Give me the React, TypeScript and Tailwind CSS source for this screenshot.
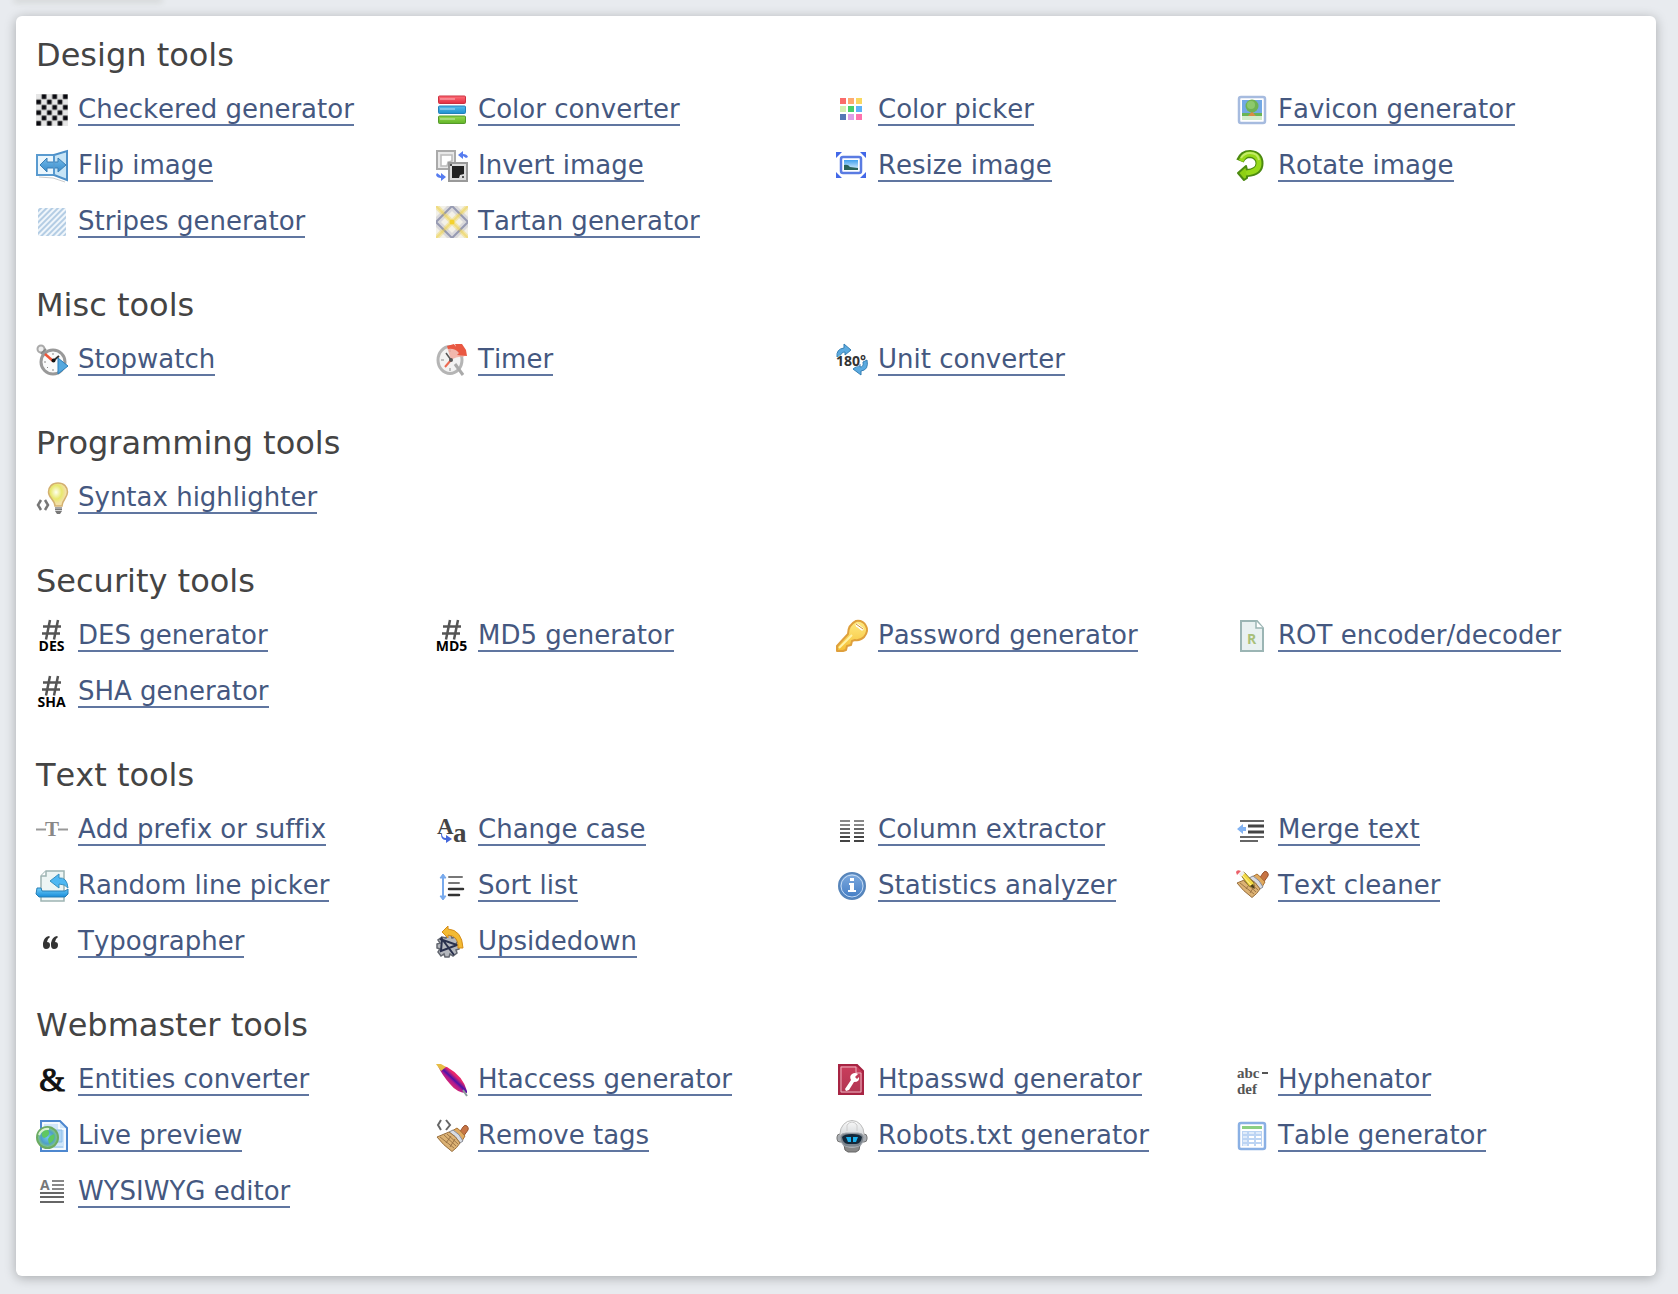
import type { ReactNode } from "react";

type Tool = { name: string; icon: ReactNode };
type ToolGroup = { title: string; tools: Tool[] };

function Gradient({ id, from, to }: { id: string; from: string; to: string }) {
  return (
    <linearGradient id={id} x1="0" y1="0" x2="0" y2="1">
      <stop offset="0" stopColor={from} />
      <stop offset="1" stopColor={to} />
    </linearGradient>
  );
}

function Hash({ label }: { label: string }) {
  return (
    <>
      <path
        d="M14 0 10 19.5M22 0l-4 19.5M7 6.5h18M6 13.5h18"
        stroke="#555"
        strokeWidth="2.5"
        fill="none"
      />
      <text
        x="15.5"
        y="31"
        textAnchor="middle"
        fontFamily="Open Sans, sans-serif"
        fontWeight="700"
        fontSize="14"
        fill="#000"
      >
        {label}
      </text>
    </>
  );
}

function Brush() {
  return (
    <>
      <path d="m23 13 4-6q2-3 4-1t1 4l-5 7z" fill="#c87544" stroke="#9a5430" />
      <path d="m16 11 5-3q3 2 8 8l-3 5q-4-6-10-10z" fill="#e0a95e" stroke="#a87234" />
      <path d="m13 12 4-2q7 4 10 11l-3 2q-4-7-11-11z" fill="#d8dbe2" stroke="#888c96" />
      <path d="M13 12q7 4 11 11-3 5-8 8.5Q7 25 1 17z" fill="#dcb274" stroke="#997040" />
      <path
        d="m4 17 14 11M8 15l12 11M11 14l11 10M10 23l5-7M14 27l5-8"
        stroke="#8f683c"
        strokeOpacity=".8"
        fill="none"
      />
    </>
  );
}

const swatches = [
  "#fb6b6b", "#fdaa70", "#f8d861",
  "#d3f0b2", "#46cf6b", "#5cb2f7",
  "#5577b5", "#dda0e6", "#ff72ae",
];

const groups: ToolGroup[] = [
  {
    title: "Design tools",
    tools: [
      {
        name: "Checkered generator",
        icon: (
          <>
            <defs>
              <pattern id="checks" width="10.667" height="10.667" patternUnits="userSpaceOnUse">
                <rect x="5.333" width="5.333" height="5.333" rx="1" fill="#777" />
                <rect y="5.333" width="5.333" height="5.333" rx="1" fill="#777" />
                <rect x="6" y=".7" width="4" height="4" fill="#08080e" />
                <rect x=".7" y="6" width="4" height="4" fill="#08080e" />
              </pattern>
            </defs>
            <rect width="32" height="32" fill="#e6e6e6" />
            <rect width="32" height="32" fill="url(#checks)" />
          </>
        ),
      },
      {
        name: "Color converter",
        icon: (
          <>
            <Gradient id="cc-red" from="#ff6d77" to="#e22c40" />
            <Gradient id="cc-blue" from="#55b9ec" to="#1e90cf" />
            <Gradient id="cc-green" from="#94d84c" to="#62b428" />
            <rect x="2.5" y="2" width="27" height="7.5" rx="1" fill="url(#cc-red)" stroke="#cc3040" />
            <rect x="2.5" y="12" width="27" height="7.5" rx="1" fill="url(#cc-blue)" stroke="#2480b8" />
            <rect x="2.5" y="22" width="27" height="7.5" rx="1" fill="url(#cc-green)" stroke="#54992a" />
            <path d="M4 5h15M4 15h15M4 25h15" stroke="#fff" strokeOpacity=".3" strokeWidth="2" />
          </>
        ),
      },
      {
        name: "Color picker",
        icon: swatches.map((fill, i) => (
          <rect key={fill} x={4 + (i % 3) * 8} y={4 + Math.floor(i / 3) * 8} width="6" height="6" fill={fill} />
        )),
      },
      {
        name: "Favicon generator",
        icon: (
          <>
            <rect x="3" y="3" width="26" height="26" rx="2" fill="#fff" stroke="#a6bbdf" strokeWidth="2.5" />
            <rect x="6" y="6" width="20" height="15" fill="#72a8e4" />
            <path d="M6 19h20v3H6z" fill="#69b455" />
            <path d="M6 22h20v4H6z" fill="#d3ecca" />
            <path d="m16 16 2 4 2 2h-8l2-2z" fill="#db8b45" />
            <circle cx="16" cy="12" r="6.5" fill="#6fb352" />
            <circle cx="15" cy="11" r="4" fill="#8dc96c" />
          </>
        ),
      },
      {
        name: "Flip image",
        icon: (
          <>
            <Gradient id="flip-arrow" from="#70b8e8" to="#398ccb" />
            <path d="M1 5h17v20H1z" fill="#eaf6fd" stroke="#5a9bd0" strokeWidth="2" />
            <path d="M18 5 31 1v29l-13-5z" fill="#c6e4f6" stroke="#4d90c8" strokeWidth="2" />
            <path d="m3 27 14 1 12 4" stroke="#aaa" fill="none" opacity=".6" />
            <path
              d="m4 15 7-7v4h11V8l8 7-8 7v-4H11v4z"
              fill="url(#flip-arrow)"
              stroke="#3b7fb5"
            />
            <path d="M18 5v20" stroke="#5a9bd0" strokeOpacity=".7" strokeWidth="2" />
          </>
        ),
      },
      {
        name: "Invert image",
        icon: (
          <>
            <rect x="1" y="1" width="18" height="18" fill="#e8e8e8" stroke="#aaa" strokeWidth="2" />
            <path d="M5 5h11v6l-4 1-1 4H5z" fill="#fff" stroke="#bbb" strokeWidth="1.5" />
            <rect x="13" y="13" width="18" height="18" fill="#ddd" stroke="#999" strokeWidth="2" />
            <path d="M16 16h12v8l-4 1-1 3h-7z" fill="#222" />
            <path d="M14 14h2v2h-2zM26 26h2v2h-2z" fill="#555" />
            <path d="m22 5 5-4v3q4 0 5 3l-2 1-3-2v3zM10 27l-5 4v-3q-4 0-5-3l1-2 4 3v-3z" fill="#567cf0" />
          </>
        ),
      },
      {
        name: "Resize image",
        icon: (
          <>
            <defs>
              <Gradient id="resize-sky" from="#3fa0ef" to="#e6f6ff" />
            </defs>
            <path d="M0 2h6L0 8zM24 2h6v6zM0 22v6h6zM30 22v6h-6z" fill="#4268e8" />
            <rect x="5" y="7" width="20" height="16" rx="2" fill="#fff" stroke="#5a7be2" strokeWidth="2.5" />
            <rect x="8" y="10" width="14" height="10" fill="url(#resize-sky)" />
            <path d="M8 15q4-1 6 2l8 1v2H8z" fill="#29635a" />
          </>
        ),
      },
      {
        name: "Rotate image",
        icon: (
          <>
            <path
              d="M4 11q3-7 10-7 9.500 1 9.500 9.500T11 23"
              fill="none"
              stroke="#4c8a10"
              strokeWidth="8"
            />
            <path d="m2 23 8-7 1 4v8l-3 2z" fill="#8ed012" stroke="#4c8a10" strokeWidth="2" strokeLinejoin="round" />
            <path
              d="M5 11q3-7 9-7 9 1 9 9.500T10 23"
              fill="none"
              stroke="#96d919"
              strokeWidth="5"
            />
            <path d="M5 8q3-5 9-5 8 0 9 7" fill="none" stroke="#c3eb67" strokeWidth="2" />
          </>
        ),
      },
      {
        name: "Stripes generator",
        icon: (
          <>
            <defs>
              <pattern
                id="stripes"
                width="4"
                height="4"
                patternUnits="userSpaceOnUse"
                patternTransform="rotate(-45)"
              >
                <rect width="4" height="2" fill="#b4cde4" />
              </pattern>
            </defs>
            <rect x="2" y="2" width="28" height="28" rx="1" fill="#f0f6fb" />
            <rect x="2" y="2" width="28" height="28" rx="1" fill="url(#stripes)" />
          </>
        ),
      },
      {
        name: "Tartan generator",
        icon: (
          <>
            <clipPath id="tartan">
              <rect width="32" height="32" />
            </clipPath>
            <rect width="32" height="32" fill="#f3f1e8" />
            <g fill="none" clipPath="url(#tartan)">
              <path d="m16 0 16 16-16 16L0 16z" stroke="#9194b2" strokeOpacity=".25" strokeWidth="7" />
              <path d="m0 0 32 32M32 0 0 32" stroke="#f2dc72" strokeOpacity=".5" strokeWidth="5" />
              <path d="m16 0 16 16-16 16L0 16z" stroke="#8589a8" strokeOpacity=".8" strokeWidth="2" />
              <path d="m0 0 32 32M32 0 0 32" stroke="#edd14a" strokeOpacity=".45" strokeWidth="2" />
            </g>
            <circle cx="16" cy="16" r="2.5" fill="#f4d22c" />
          </>
        ),
      },
    ],
  },
  {
    title: "Misc tools",
    tools: [
      {
        name: "Stopwatch",
        icon: (
          <>
            <circle cx="5" cy="5" r="3.5" fill="#eee" stroke="#aaa" strokeWidth="2" />
            <path d="m5 10 5-5" stroke="#888" strokeWidth="2" />
            <circle cx="17" cy="18" r="12" fill="#fafafa" stroke="#999" strokeWidth="3" />
            <path d="M17 9v2M8 18h2M17 25v2M11 24l1-1" stroke="#888" />
            <path d="m9 10 8 7" stroke="#f05537" strokeWidth="2.5" />
            <path d="m17 17 6-5" stroke="#333" strokeWidth="2" />
            <circle cx="17.5" cy="16.5" r="2" fill="#111" />
            <path d="M22 14v16l10-8z" fill="#55a8de" stroke="#2d7fba" />
          </>
        ),
      },
      {
        name: "Timer",
        icon: (
          <>
            <ellipse cx="14" cy="16" rx="12" ry="13.5" fill="#f2f2f2" stroke="#b5b5b5" strokeWidth="3" />
            <path d="M14 5v3M5 16h3M14 24v3M21 24l-2-2" stroke="#888" />
            <path d="m19 20 8 11" stroke="#aaa" strokeWidth="3" />
            <path d="M15 16 11 3q7-3 12 1l7 7-3 2q-5-1-12 3z" fill="#f0a79b" fillOpacity=".8" />
            <path d="m11 2 7-2 2 3-1-3h7l4 6 1 6-10-1 2-2q-4-5-11-4z" fill="#e95842" />
            <path d="m15 16-6 7" stroke="#ec6a52" strokeWidth="2" />
            <path d="m15 16-5-7" stroke="#555" strokeWidth="1.5" />
            <circle cx="15" cy="16" r="2" fill="#555" />
          </>
        ),
      },
      {
        name: "Unit converter",
        icon: (
          <>
            <path d="M1 13Q0 5 8 4V0l7 6-6 5V8q-4 0-5 5z" fill="#5baae0" stroke="#347fb4" />
            <path d="M31 16q2 10-6 11v4l-8-6 7-5v3q4 0 3-5z" fill="#5baae0" stroke="#347fb4" />
            <text
              x="0"
              y="22"
              fontFamily="Open Sans, sans-serif"
              fontWeight="700"
              fontSize="14"
              fill="#333"
              stroke="#fff"
              strokeWidth="1"
              paintOrder="stroke"
            >
              180°
            </text>
          </>
        ),
      },
    ],
  },
  {
    title: "Programming tools",
    tools: [
      {
        name: "Syntax highlighter",
        icon: (
          <>
            <defs>
              <radialGradient id="bulb" cx=".4" cy=".4">
                <stop offset="0" stopColor="#fffff0" />
                <stop offset=".6" stopColor="#e8e86e" />
                <stop offset="1" stopColor="#f3e1a5" />
              </radialGradient>
            </defs>
            <path d="m5 18-3 5 3 5M9 18l3 5-3 5" fill="none" stroke="#777" strokeWidth="2.5" />
            <path
              d="M22 1c6 0 9.500 4 9.500 9 0 6-5.500 8-5.500 14h-7c0-6-6.500-8-6.500-14 0-5 3.500-9 9.500-9z"
              fill="url(#bulb)"
              stroke="#d3b070"
              strokeWidth="1.5"
            />
            <path d="M19 25h7v4l-2 3h-3l-2-3z" fill="#777" />
            <path d="M19 26h7M19 28.500h7" stroke="#d5d5d5" />
          </>
        ),
      },
    ],
  },
  {
    title: "Security tools",
    tools: [
      { name: "DES generator", icon: <Hash label="DES" /> },
      { name: "MD5 generator", icon: <Hash label="MD5" /> },
      {
        name: "Password generator",
        icon: (
          <>
            <Gradient id="key-gold" from="#ffeb83" to="#f5bf34" />
            <path
              d="M20 1q7-1 10 5 3 5-2 11-4 4-9 3l-3 1-1 4-4 1-1 4-3 1H1v-5l11-12q0-9 8-13z"
              fill="url(#key-gold)"
              stroke="#dfa03c"
              strokeWidth="2"
              strokeLinejoin="round"
            />
            <path d="m3 28 13-13" stroke="#fff3a8" strokeWidth="2" />
            <path d="m21 5 5 4" stroke="#fff" strokeWidth="3" strokeLinecap="round" />
            <path d="m20 4 7 5" stroke="#cf9236" fill="none" />
          </>
        ),
      },
      {
        name: "ROT encoder/decoder",
        icon: (
          <>
            <path d="M5 1h16l6 7v23H5z" fill="#e9f1f1" stroke="#9bb5b4" strokeWidth="2" />
            <path d="M20 1v7h7" fill="#fff" stroke="#9bb5b4" strokeWidth="1.5" />
            <text
              x="15.5"
              y="24"
              textAnchor="middle"
              fontFamily="Open Sans, sans-serif"
              fontWeight="700"
              fontSize="14"
              fill="#a8c078"
            >
              R
            </text>
          </>
        ),
      },
      { name: "SHA generator", icon: <Hash label="SHA" /> },
    ],
  },
  {
    title: "Text tools",
    tools: [
      {
        name: "Add prefix or suffix",
        icon: (
          <>
            <path d="M0 15.500h10M22 15.500h10" stroke="#999" strokeWidth="2" />
            <text
              x="16"
              y="22"
              textAnchor="middle"
              fontFamily="Liberation Serif, serif"
              fontWeight="700"
              fontSize="21"
              fill="#888"
            >
              T
            </text>
          </>
        ),
      },
      {
        name: "Change case",
        icon: (
          <>
            <g fontFamily="Liberation Serif, serif" fontWeight="700" fill="#444">
              <text x="1" y="20" fontSize="23">A</text>
              <text x="17" y="28" fontSize="27">a</text>
            </g>
            <path d="M6 20q0 4 4 4v-3l6 4-6 4v-3q-5 0-5-6z" fill="#4467dc" />
          </>
        ),
      },
      {
        name: "Column extractor",
        icon: (
          <>
            <path d="M4 7h10M18 7h10M4 11h10M18 11h10" stroke="#888" strokeWidth="2" />
            <path d="M4 15h10M18 15h10M4 19h10M18 19h10" stroke="#666" strokeWidth="2" />
            <path d="M4 23h10M18 23h10M4 27h10M18 27h10" stroke="#444" strokeWidth="2" />
          </>
        ),
      },
      {
        name: "Merge text",
        icon: (
          <>
            <path d="M4 7h24M4 23h24M4 27h18" stroke="#666" strokeWidth="2" />
            <path d="M12 12h16M12 18h16" stroke="#444" strokeWidth="3" />
            <path d="m1 15 6-5v3h3v4H7v3z" fill="#83b3f2" />
          </>
        ),
      },
      {
        name: "Random line picker",
        icon: (
          <>
            <Gradient id="tray" from="#72d0fb" to="#198bd8" />
            <path d="M5 24V6l5-5h18v22z" fill="#edf5f4" stroke="#9db4b3" strokeWidth="1.5" />
            <path d="M5 6h5V1" fill="#fff" stroke="#9db4b3" strokeWidth="1.5" />
            <path d="M5 25h23v6H5z" fill="#f2f6f5" stroke="#9db4b3" strokeWidth="1.5" />
            <path d="M1 18h4l1 3h23l3-2v5l-3 3H3l-3-3z" fill="url(#tray)" stroke="#287fb5" />
            <path d="m14 11 9-7v4q8-1 9 10-3-4-9-4v4z" fill="#4fb8f3" stroke="#378fbe" />
          </>
        ),
      },
      {
        name: "Sort list",
        icon: (
          <>
            <path d="M7 5v24" stroke="#78aaed" strokeWidth="2" />
            <path d="m4 8 3-4 3 4zM4 26l3 4 3-4z" fill="#78aaed" stroke="#78aaed" />
            <path d="M13 7h13M13 13h10" stroke="#777" strokeWidth="2" strokeLinecap="round" />
            <path d="M13 19h14M13 25h10" stroke="#333" strokeWidth="2.5" strokeLinecap="round" />
          </>
        ),
      },
      {
        name: "Statistics analyzer",
        icon: (
          <>
            <Gradient id="info-blue" from="#80ace0" to="#417bc3" />
            <circle cx="16" cy="16" r="13" fill="url(#info-blue)" stroke="#5785ba" strokeWidth="2" />
            <circle cx="16" cy="16" r="11" fill="none" stroke="#c6dcf3" strokeWidth="1" />
            <path d="M14 8h4v3h-4zM13 13h5v7h2v2h-8v-2h2v-5h-1z" fill="#fff" />
          </>
        ),
      },
      {
        name: "Text cleaner",
        icon: (
          <>
            <g transform="translate(0 -4)">
              <Brush />
            </g>
            <path d="m4 4 4-2 10 11v5l-5-2z" fill="#f3d943" stroke="#8d7a2d" />
            <path d="m6 5 9 10" stroke="#fff4a0" />
            <path d="m14 16 3-2 2 5z" fill="#4b3b20" />
            <path d="m3 4 3-3 3 2-4 4z" fill="#eee" />
            <path d="M0 2q1-3 5-1L1 5z" fill="#eb5f68" />
          </>
        ),
      },
      {
        name: "Typographer",
        icon: (
          <path
            d="M13 10q-5 1-6 7v2q0 4 3 4 4 0 4-4 0-3-3-3 0-3 3-5zM21 10q-5 1-6 7v2q0 4 3 4 4 0 4-4 0-3-3-3 0-3 3-5z"
            fill="#333"
          />
        ),
      },
      {
        name: "Upsidedown",
        icon: (
          <>
            <path
              d="m10 12 1-3h4l1 3 3-1 3 4-2 3 3 1v4l-3 1 1 3-4 3-3-2-1 3h-4l-1-3-3 2-3-4 2-3-3-1v-4l3-1-2-3 4-3z"
              fill="#b4b7bd"
              stroke="#62666f"
              strokeWidth="1.5"
            />
            <path d="m4 13 17 6L5 25l1-12 12 16" fill="none" stroke="#29304d" strokeWidth="2" />
            <path d="m6 6 6-6v3q14 1 15 19h-5q1-12-10-13v3z" fill="#f3ba32" stroke="#d58d1a" />
          </>
        ),
      },
    ],
  },
  {
    title: "Webmaster tools",
    tools: [
      {
        name: "Entities converter",
        icon: (
          <text
            x="16"
            y="27"
            textAnchor="middle"
            fontFamily="Liberation Serif, serif"
            fontSize="33"
            fill="#111"
            stroke="#111"
          >
            &amp;
          </text>
        ),
      },
      {
        name: "Htaccess generator",
        icon: (
          <>
            <linearGradient id="feather" x1=".3" y1=".7" x2=".7" y2=".3">
              <stop offset="0" stopColor="#f0325f" />
              <stop offset=".4" stopColor="#b01a90" />
              <stop offset=".55" stopColor="#4b12a8" />
              <stop offset=".8" stopColor="#e8286c" />
            </linearGradient>
            <path d="m2 2 9 1q16 9 20 24v2q-10 0-17-9Q6 11 2 2z" fill="url(#feather)" />
            <path d="M0 0h5l5 3-5 4z" fill="#e7bd45" />
            <path d="m27 26 4 6" stroke="#899" strokeWidth="2" />
          </>
        ),
      },
      {
        name: "Htpasswd generator",
        icon: (
          <>
            <Gradient id="htp-red" from="#cb3d5c" to="#b03552" />
            <path d="M3 1h18l6 6v23H3z" fill="url(#htp-red)" stroke="#a72443" strokeWidth="2" />
            <path d="M5 3h15v6h5v19H5z" fill="none" stroke="#edb2bf" />
            <path
              d="m9 25 6-9q-2-4 1-6 3-2 6 0l-3 3 2 2 2-2q1 5-5 5l-5 8-3 1z"
              fill="#fff"
            />
          </>
        ),
      },
      {
        name: "Hyphenator",
        icon: (
          <>
            <g fontFamily="Liberation Serif, serif" fontWeight="700" fontSize="15" fill="#555">
              <text x="1" y="14">abc</text>
              <text x="1" y="30">def</text>
            </g>
            <path d="M26 9h6" stroke="#555" strokeWidth="2" />
          </>
        ),
      },
      {
        name: "Live preview",
        icon: (
          <>
            <defs>
              <radialGradient id="globe" cx=".5" cy=".5">
                <stop offset="0" stopColor="#6ec5ef" />
                <stop offset=".6" stopColor="#4f9ec8" />
                <stop offset="1" stopColor="#8bd07c" />
              </radialGradient>
            </defs>
            <path d="M5 1h19l7 7v23H5z" fill="#cfe6fa" stroke="#4d87cf" strokeWidth="2" />
            <path d="M7 3h16v6h6v20H7z" fill="none" stroke="#fff" strokeWidth="1.5" />
            <path d="M20 10h6v12h-6zM18 27h9" fill="#afd5f5" stroke="#91bfe9" />
            <circle cx="11.5" cy="17.5" r="10.5" fill="url(#globe)" stroke="#6cab62" strokeWidth="2" />
            <path d="M7 11q5-3 6 1t-5 6q-4-2-1-7zM14 16l4-2q2 4-2 8l-3 2-1-5z" fill="#5fc761" />
            <path d="M3 15q3-7 10-6" stroke="#d7f3d0" strokeWidth="2" fill="none" />
          </>
        ),
      },
      {
        name: "Remove tags",
        icon: (
          <>
            <Brush />
            <path d="M5 0 2 5l3 5M10 0l4 5-4 5" fill="none" stroke="#666" strokeWidth="2" />
          </>
        ),
      },
      {
        name: "Robots.txt generator",
        icon: (
          <>
            <Gradient id="helmet" from="#fafafa" to="#b9bdc1" />
            <path d="M8 25h16l-1 5-3 2h-8l-3-2z" fill="#888" stroke="#666" />
            <rect x="1" y="14" width="30" height="8" rx="3" fill="#a9adb2" stroke="#777" />
            <ellipse cx="16" cy="14" rx="12" ry="13.5" fill="url(#helmet)" stroke="#bbb" />
            <path d="M11 11V5q5-6 10 0v6" fill="none" stroke="#ccc" />
            <path d="M4 17q1-4 6-4h12q5 0 6 4-1 10-9 10h-6q-8 0-9-10z" fill="#7d858d" stroke="#a5aab0" />
            <path d="M6 17q2-3 10-3t10 3q-1 7-6 7h-8q-5 0-6-7z" fill="#14283a" />
            <path d="M10 17h5v5h-3zM17 17h5l-2 5h-3z" fill="#1bb1ed" />
          </>
        ),
      },
      {
        name: "Table generator",
        icon: (
          <>
            <rect x="3" y="3" width="26" height="26" rx="2" fill="#fff" stroke="#8ab0e4" strokeWidth="2.5" />
            <path d="M6 7.500h20" stroke="#8ccf83" strokeWidth="3" />
            <path d="M6 11h20v15H6z" fill="#bcd4f3" />
            <path d="M7 12h4v2H7zm6 0h5v2h-5zm7 0h5v2h-5zM7 16h4v2H7zm0 4h4v2H7zm0 4h4v2H7z" fill="#dfebfa" />
            <path d="M13 16h5v2h-5zm7 0h5v2h-5zm-7 4h5v2h-5zm7 0h5v2h-5zm-7 4h5v2h-5zm7 0h5v2h-5z" fill="#fff" />
          </>
        ),
      },
      {
        name: "WYSIWYG editor",
        icon: (
          <>
            <path d="M16 5h12M16 9h12M16 13h12" stroke="#888" strokeWidth="2" />
            <path d="M4 17h24M4 21h24M4 26h24" stroke="#666" strokeWidth="2" />
            <text x="4" y="14" fontFamily="Open Sans, sans-serif" fontWeight="700" fontSize="14" fill="#777">
              A
            </text>
          </>
        ),
      },
    ],
  },
];

function ToolLink({ tool }: { tool: Tool }) {
  return (
    <li className="flex h-8 items-end gap-[10px]">
      <svg viewBox="0 0 32 32" className="size-8 shrink-0 overflow-visible" aria-hidden="true">
        {tool.icon}
      </svg>
      <a
        href="#"
        className="h-8 border-b-2 border-[#6076a0] text-[26px] leading-[30px] whitespace-nowrap text-[#455880] hover:border-transparent"
      >
        {tool.name}
      </a>
    </li>
  );
}

export default function App() {
  return (
    <div className="min-h-screen overflow-hidden bg-[#e8ebef] pb-[18px] font-['Verdana','DejaVu_Sans',sans-serif] [font-kerning:none] [font-variant-ligatures:none]">
      <div className="ml-4 h-0 w-36 shadow-[0_0_6px_2px_rgba(90,95,70,0.2)]" />
      <main className="mt-4 mr-[22px] ml-4 rounded-md bg-white px-5 pt-[18px] pb-[22px] shadow-[0_2px_12px_rgba(0,0,0,0.28)]">
        {groups.map((group) => (
          <section key={group.title} className="pb-[46px]">
            <h2 className="mb-[18px] text-[32px] leading-[42px] text-[#444]">{group.title}</h2>
            <ul className="grid grid-cols-4 gap-y-6">
              {group.tools.map((tool) => (
                <ToolLink key={tool.name} tool={tool} />
              ))}
            </ul>
          </section>
        ))}
      </main>
    </div>
  );
}
